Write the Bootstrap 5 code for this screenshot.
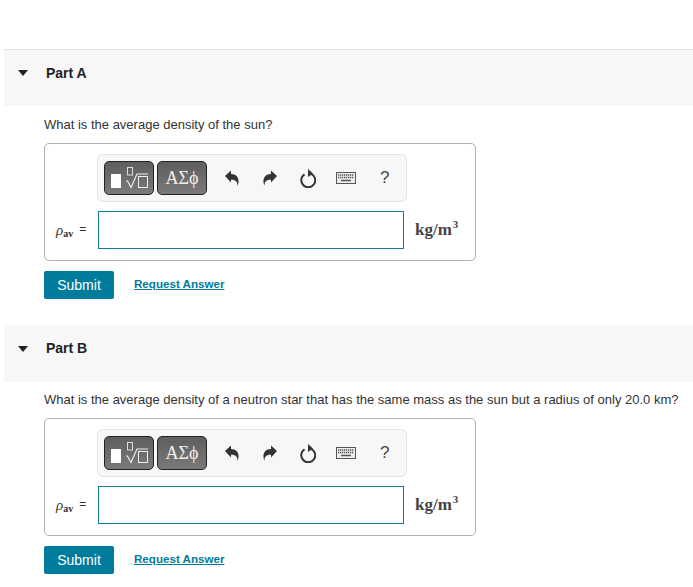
<!DOCTYPE html>
<html lang="en">

<head>
    <meta charset="UTF-8">
    <meta name="viewport" content="width=device-width, initial-scale=1.0">
    <title>Density Problem</title>
    <link rel="stylesheet" href="https://cdn.jsdelivr.net/npm/bootstrap@5.3.3/dist/css/bootstrap.min.css">
    <script src="https://cdn.jsdelivr.net/npm/bootstrap@5.3.3/dist/js/bootstrap.bundle.min.js"></script>
    <style>
        body {
            font-family: "Liberation Sans", Arial, sans-serif;
            font-size: 14px;
            color: #333;
            background: #fff;
            overflow: hidden;
        }

        .page-wrap { padding: 49px 0 0 4px; }

        .part-head {
            height: 57px;
            background: #f7f7f7;
            padding-left: 14px;
            padding-bottom: 10px;
        }

        .part-head-first { border-top: 1px solid #e3e3e3; }

        .part-body { padding: 9px 0 26px 40px; }
        .part-body-first { padding-top: 10px; }

        .part-arrow {
            width: 0;
            height: 0;
            border-left: 5.5px solid transparent;
            border-right: 5.5px solid transparent;
            border-top: 6px solid #222;
            margin-right: 18px;
        }

        .part-title {
            margin: 0;
            font-size: 14px;
            font-weight: 700;
            color: #222;
        }

        .question-text {
            margin: 0 0 10px;
            height: 17px;
            line-height: 17px;
            font-size: 13px;
            white-space: nowrap;
        }

        .answer-box {
            width: 432px;
            height: 118px;
            border: 1px solid #b0b0b0;
            border-radius: 5px;
            padding: 10px 16px 0 10px;
        }

        .tool-strip {
            width: 310px;
            height: 48px;
            margin-left: 42px;
            margin-bottom: 9px;
            background: #f7f7f7;
            border: 1px solid #e4e4e4;
            border-radius: 6px;
            padding-left: 6px;
        }

        .tool-btn {
            height: 34px;
            border: 1px solid #222;
            border-radius: 5px;
            background: linear-gradient(#5e5e5e, #7a7a7a);
            color: #eee;
        }

        .tool-btn-math { width: 50px; margin-right: 3px; }

        .tool-btn-greek {
            width: 50px;
            font-family: "Liberation Serif", "DejaVu Serif", serif;
            font-size: 18px;
        }

        .tool-icon { display: block; flex: none; }
        .undo-icon { margin-left: 18px; }
        .redo-icon { margin-left: 24px; }
        .reset-icon { margin-left: 23px; }
        .keys-icon { margin-left: 20px; }

        .help-mark {
            margin-left: 24px;
            font-size: 17px;
            color: #444;
        }

        .var-label {
            width: 43px;
            padding-left: 1px;
            font-family: "Liberation Serif", serif;
            font-size: 14px;
            white-space: nowrap;
        }

        .var-label i { font-size: 15px; color: #4a3a2a; }
        .var-label sub { font-size: 10px; font-weight: 700; bottom: -0.2em; }
        .var-label .eq { font-family: "Liberation Sans", sans-serif; font-size: 12px; margin-left: 6px; position: relative; top: -2px; }

        .answer-input {
            width: 306px;
            height: 38px;
            border: 1px solid #0f7c9c;
            border-radius: 0;
            padding: 0 6px;
        }

        .unit-text {
            margin-left: 11px;
            font-family: "Liberation Serif", serif;
            font-size: 17px;
            font-weight: 700;
            color: #444;
            white-space: nowrap;
        }

        .unit-text sup { font-size: 11px; top: -0.7em; margin-left: 1px; }

        .action-row { margin-top: 10px; }

        .submit-btn {
            width: 70px;
            height: 28px;
            padding: 0;
            border: 0;
            border-radius: 2px;
            background: #007b9c;
            color: #fff;
            font-size: 14px;
        }

        .answer-link {
            margin-left: 20px;
            margin-top: -2px;
            font-size: 11.6px;
            font-weight: 700;
            color: #007b9c;
        }
    </style>
</head>

<body>
    <div class="page-wrap" id="parts"></div>

    <script>
        const parts = [
            { title: 'Part A', question: 'What is the average density of the sun?' },
            { title: 'Part B', question: 'What is the average density of a neutron star that has the same mass as the sun but a radius of only 20.0 km?' }
        ]

        const toolbar = `
            <div class="tool-strip d-flex align-items-center">
                <div class="tool-btn tool-btn-math d-flex align-items-center justify-content-center">
                    <svg width="38" height="26" viewBox="0 0 38 26" class="tool-icon">
                        <rect x="1" y="9" width="10" height="14" fill="#fff"/>
                        <rect x="17.500" y="2.500" width="5" height="7.500" fill="none" stroke="#ddd"/>
                        <path d="M16 16l1.500 0 3.500 6.500 6-13.500h11" fill="none" stroke="#eee" stroke-width="1.200"/>
                        <rect x="28.500" y="11.500" width="9" height="11" fill="none" stroke="#eee"/>
                    </svg>
                </div>
                <div class="tool-btn tool-btn-greek d-flex align-items-center justify-content-center">&Alpha;&Sigma;&#981;</div>
                <svg class="tool-icon undo-icon" width="14" height="16" viewBox="0 0 14 16">
                    <path d="M0 6l6-5.500v3.500c5 0 8 3 7.500 8.500-.2 1.200-.5 2.400-1 3.500.2-4-1.500-6.500-6.500-6.300v2.800z" fill="#333"/>
                </svg>
                <svg class="tool-icon redo-icon" width="14" height="16" viewBox="0 0 14 16">
                    <path d="M14 6l-6-5.500v3.500c-5 0-8 3-7.500 8.500.2 1.200.5 2.400 1 3.500-.2-4 1.500-6.500 6.500-6.300v2.800z" fill="#333"/>
                </svg>
                <svg class="tool-icon reset-icon" width="16" height="19" viewBox="0 0 16 19">
                    <path d="M4.500 5.300a7 7 0 1 0 6.500-.5" fill="none" stroke="#333" stroke-width="2"/>
                    <path d="M8 0l5 4.500-5 3.500z" fill="#333"/>
                </svg>
                <svg class="tool-icon keys-icon" width="20" height="12" viewBox="0 0 20 12">
                    <rect x="0.500" y="0.500" width="19" height="11" fill="#eee" stroke="#555"/>
                    <path d="M2 3h16M2 5.500h16" stroke="#555" stroke-width="1.300" stroke-dasharray="1.300 .7"/>
                    <path d="M5 8.500h10" stroke="#555" stroke-width="1.500"/>
                </svg>
                <span class="help-mark">?</span>
            </div>`

        const partsDiv = document.getElementById('parts')

        for (let i = 0; i < parts.length; i++) {
            const head = document.createElement('div')
            head.className = 'part-head d-flex align-items-center'
            if (i === 0) head.classList.add('part-head-first')
            head.innerHTML = `<span class="part-arrow"></span><h2 class="part-title">${parts[i].title}</h2>`
            partsDiv.appendChild(head)

            const body = document.createElement('div')
            body.className = i === 0 ? 'part-body part-body-first' : 'part-body'
            body.innerHTML = `
                <p class="question-text">${parts[i].question}</p>
                <div class="answer-box">
                    ${toolbar}
                    <div class="d-flex align-items-center">
                        <span class="var-label"><i>&rho;</i><sub>av</sub><span class="eq">=</span></span>
                        <input class="answer-input form-control" type="text" aria-label="answer">
                        <span class="unit-text">kg/m<sup>3</sup></span>
                    </div>
                </div>
                <div class="action-row d-flex align-items-center">
                    <button class="submit-btn btn" type="button">Submit</button>
                    <a class="answer-link" href="#">Request Answer</a>
                </div>`
            partsDiv.appendChild(body)
        }
    </script>
</body>

</html>
